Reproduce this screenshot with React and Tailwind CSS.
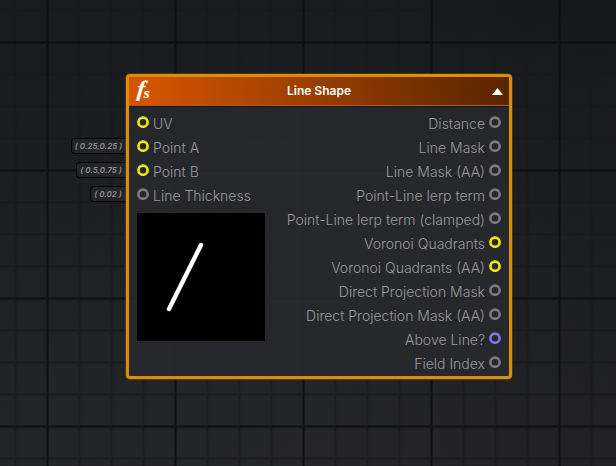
const inputs = [
  { label: 'UV', ring: 'text-[#ecec0c]' },
  { label: 'Point A', ring: 'text-[#ecec0c]' },
  { label: 'Point B', ring: 'text-[#ecec0c]' },
  { label: 'Line Thickness', ring: 'text-[#7c7a7b]' },
];

const outputs = [
  { label: 'Distance', ring: 'text-[#7c7a7b]' },
  { label: 'Line Mask', ring: 'text-[#7c7a7b]' },
  { label: 'Line Mask (AA)', ring: 'text-[#7c7a7b]' },
  { label: 'Point-Line lerp term', ring: 'text-[#7c7a7b]' },
  { label: 'Point-Line lerp term (clamped)', ring: 'text-[#7c7a7b]' },
  { label: 'Voronoi Quadrants', ring: 'text-[#ecec0c]' },
  { label: 'Voronoi Quadrants (AA)', ring: 'text-[#ecec0c]' },
  { label: 'Direct Projection Mask', ring: 'text-[#7c7a7b]' },
  { label: 'Direct Projection Mask (AA)', ring: 'text-[#7c7a7b]' },
  { label: 'Above Line?', ring: 'text-[#7a78ee]' },
  { label: 'Field Index', ring: 'text-[#7c7a7b]' },
];

const defaults = [
  { text: '( 0.25,0.25 )', size: 'w-[55px]' },
  { text: '( 0.5,0.75 )', size: 'w-[50px]' },
  { text: '( 0.02 )', size: 'w-[36px]' },
];

function Port({ ring }) {
  return (
    <svg className={`size-3 shrink-0 ${ring}`} viewBox="0 0 12 12" aria-hidden="true">
      <circle cx="6" cy="6.2" r="4.6" fill="none" stroke="currentColor" strokeWidth="2.6" />
    </svg>
  );
}

function Grid() {
  return (
    <>
      <div className="absolute inset-0 bg-[linear-gradient(to_right,#17191a_2px,transparent_3px),linear-gradient(to_bottom,#17191a_2px,transparent_3px)] bg-[size:32px_32px] bg-[position:14px_9px] opacity-50" />
      <div className="absolute inset-0 bg-[linear-gradient(to_right,transparent,#0a0b0c_1px,#0a0b0c_2px,transparent_3px),linear-gradient(to_bottom,transparent,#0a0b0c_1px,#0a0b0c_2px,transparent_3px)] bg-[size:128px_128px] bg-[position:46px_41px] opacity-65" />
    </>
  );
}

export default function App() {
  return (
    <div className="relative h-[466px] w-[616px] overflow-hidden bg-[linear-gradient(170deg,#191a1d_0%,#1b1c1f_20%,#222327_65%,#27272b_100%)] font-['Inter',sans-serif]">
      <div className="absolute inset-0 bg-linear-to-r from-transparent from-50% to-black/15" />
      <Grid />
      <div className="relative flex pt-[74px]">
        <div className="flex w-[126px] flex-col items-end gap-2 pt-[64px]">
          {defaults.map((d) => (
            <div
              key={d.text}
              className={`flex h-4 items-center justify-center rounded-l-[4px] border border-r-0 border-black bg-[#232427] pr-px text-[8px] font-semibold whitespace-nowrap text-[#929294] italic ${d.size}`}
            >
              {d.text}
            </div>
          ))}
        </div>
        <div className="flex h-[305px] w-[386px] flex-col overflow-hidden rounded-[4px] border-[3px] border-[#d98f05] bg-[#28292d]/90 shadow-[0_0_0_0.5px_#7a5208]">
          <header className="flex h-[29px] shrink-0 items-center border-b border-[#b75a1c] bg-linear-to-r from-[#d35400] from-5% to-[#592500] pr-[6px] pl-[4px] shadow-[0_1px_0_#15161a]">
            <svg className="h-[28px] w-[20px]" viewBox="0 0 20 28" aria-hidden="true">
              <text transform="translate(3.6 19.3) skewX(-6) scale(1.05 1)" fontSize="22" fontWeight="700" fontStyle="italic" fill="white" stroke="white" strokeWidth="0.2" fontFamily="Liberation Serif, serif">f</text>
              <text x="10.7" y="20.8" fontSize="15" fontWeight="700" fontStyle="italic" fill="white" stroke="white" strokeWidth="0.2" fontFamily="Liberation Serif, serif">s</text>
            </svg>
            <h1 className="flex-1 pr-[7px] text-center text-[12px] font-semibold text-white">Line Shape</h1>
            <svg className="mt-px h-[7px] w-[11px]" viewBox="0 0 11 7" aria-hidden="true">
              <path d="M5.5 0L11 7H0Z" fill="white" />
            </svg>
          </header>
          <div className="flex justify-between pt-[4px] pr-[8px] pl-[8px] text-[14px] font-light text-[#9a9a9c]">
            <div>
              {inputs.map((p) => (
                <div key={p.label} className="flex h-6 items-center gap-1 whitespace-nowrap">
                  <Port ring={p.ring} />
                  <span className="pt-0.5">{p.label}</span>
                </div>
              ))}
              <svg className="mt-[7px] block size-32 bg-black" viewBox="0 0 128 128">
                <line x1="32" y1="96" x2="64" y2="32" stroke="white" strokeWidth="4.4" strokeLinecap="round" />
              </svg>
            </div>
            <div>
              {outputs.map((p) => (
                <div key={p.label} className="flex h-6 items-center justify-end gap-1 whitespace-nowrap">
                  <span className="pt-0.5">{p.label}</span>
                  <Port ring={p.ring} />
                </div>
              ))}
            </div>
          </div>
        </div>
      </div>
    </div>
  );
}
